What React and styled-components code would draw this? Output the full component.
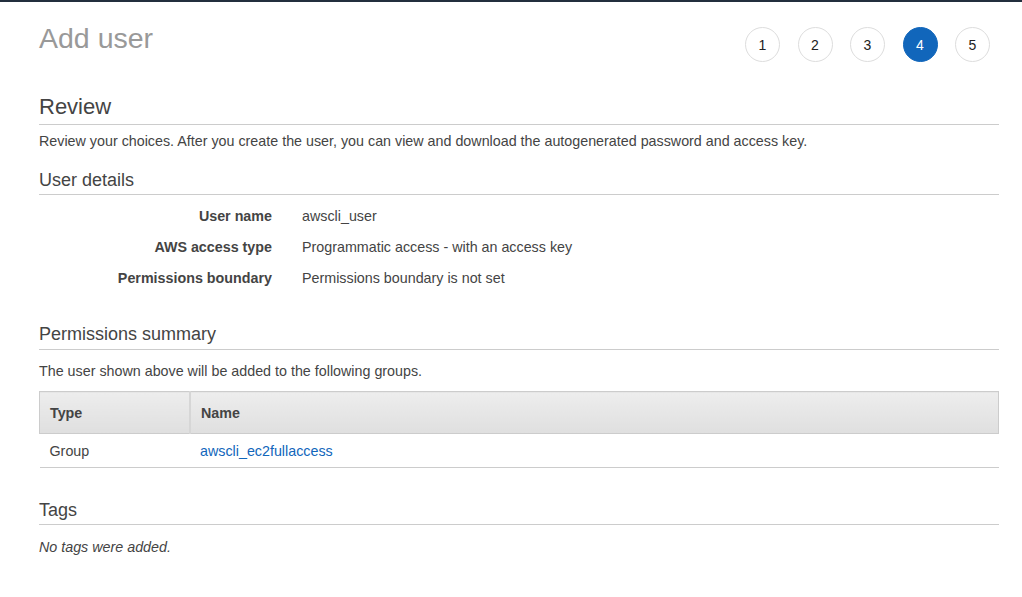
import React from 'react';
import styled, { createGlobalStyle } from 'styled-components';

const GlobalStyle = createGlobalStyle`
  body {
    margin: 0;
    background: #fff;
    font-family: "Liberation Sans", Arial, sans-serif;
    font-size: 14.3px;
    color: #444;
  }
`;

const TopBar = styled.div`
  height: 2px;
  background: #232f3e;
`;

const Page = styled.div`
  padding: 0 23px 40px 39px;
`;

const Header = styled.header`
  display: flex;
  justify-content: space-between;
  align-items: flex-start;
`;

const Title = styled.h1`
  margin: 19px 0 0;
  font-size: 28.5px;
  font-weight: 400;
  line-height: 34px;
  color: #999;
`;

const Steps = styled.ol`
  display: flex;
  gap: 17.5px;
  list-style: none;
  margin: 25px 9px 0 0;
  padding: 0;
`;

const Step = styled.li`
  width: 35px;
  height: 35px;
  box-sizing: border-box;
  border-radius: 50%;
  display: flex;
  align-items: center;
  justify-content: center;
  font-size: 14px;
  border: 1px solid ${p => (p.active ? '#1166bb' : '#ddd')};
  background: ${p => (p.active ? '#1166bb' : '#fff')};
  color: ${p => (p.active ? '#fff' : '#222')};
`;

const SectionTitle = styled.h2`
  margin: ${p => p.top || 0}px 0 0;
  padding-bottom: ${p => p.pad ?? (p.big ? 3 : 2)}px;
  border-bottom: 1px solid #ccc;
  font-size: ${p => (p.big ? 22 : 18)}px;
  line-height: ${p => (p.big ? 28 : 24)}px;
  font-weight: 400;
  color: #444;
`;

const Text = styled.p`
  margin: ${p => p.top || 8}px 0 0;
  line-height: 18px;
  font-style: ${p => (p.italic ? 'italic' : 'normal')};
`;

const Details = styled.dl`
  display: grid;
  grid-template-columns: 233px 1fr;
  column-gap: 30px;
  row-gap: 13px;
  margin: 12px 0 0;
`;

const Label = styled.dt`
  text-align: right;
  font-weight: 700;
  line-height: 18px;
`;

const Value = styled.dd`
  margin: 0;
  line-height: 18px;
`;

const Table = styled.table`
  width: 100%;
  margin-top: 11px;
  border-collapse: collapse;
`;

const Th = styled.th`
  height: 41px;
  padding: 0 10px;
  text-align: left;
  font-weight: 700;
  background: linear-gradient(#ededed, #dfdfdf);
  border: 1px solid #ccc;
  border-left: ${p => (p.first ? '1px solid #ccc' : '2px solid #d6d6d6')};
  width: ${p => p.w || 'auto'};
`;

const Td = styled.td`
  height: 33px;
  padding: 0 10px;
  border-bottom: 1px solid #ccc;
`;

const Link = styled.a`
  color: #1166bb;
  text-decoration: none;
`;

export default function App() {
  const details = [
    ['User name', 'awscli_user'],
    ['AWS access type', 'Programmatic access - with an access key'],
    ['Permissions boundary', 'Permissions boundary is not set']
  ];

  return (
    <>
      <GlobalStyle />
      <TopBar />
      <Page>
        <Header>
          <Title>Add user</Title>
          <Steps>
            {[1, 2, 3, 4, 5].map(n => (
              <Step key={n} active={n === 4}>
                {n}
              </Step>
            ))}
          </Steps>
        </Header>

        <SectionTitle big top={31}>Review</SectionTitle>
        <Text top={7}>
          Review your choices. After you create the user, you can view and download the autogenerated password and access key.
        </Text>

        <SectionTitle top={18}>User details</SectionTitle>
        <Details>
          {details.map(([label, value]) => (
            <React.Fragment key={label}>
              <Label>{label}</Label>
              <Value>{value}</Value>
            </React.Fragment>
          ))}
        </Details>

        <SectionTitle top={35} pad={3}>Permissions summary</SectionTitle>
        <Text top={12}>The user shown above will be added to the following groups.</Text>
        <Table>
          <thead>
            <tr>
              <Th first w="129px">Type</Th>
              <Th>Name</Th>
            </tr>
          </thead>
          <tbody>
            <tr>
              <Td>Group</Td>
              <Td>
                <Link href="#">awscli_ec2fullaccess</Link>
              </Td>
            </tr>
          </tbody>
        </Table>

        <SectionTitle top={30}>Tags</SectionTitle>
        <Text top={13} italic>No tags were added.</Text>
      </Page>
    </>
  );
}
